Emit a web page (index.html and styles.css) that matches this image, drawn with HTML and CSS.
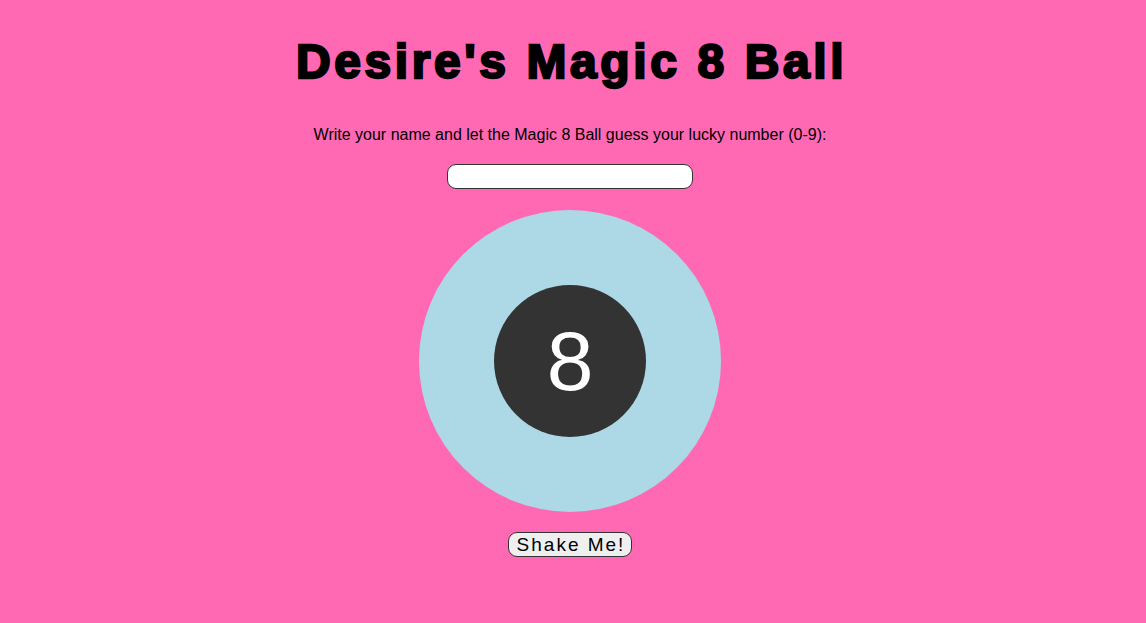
FILE: index.html
```html
<!DOCTYPE html>
<html>
<head>
<meta charset="utf-8">
<title>Desire's Magic 8 Ball</title>
<link rel="stylesheet" href="styles.css">
</head>
<body>
<main class="page">
  <h1 class="title">Desire's Magic 8 Ball</h1>
  <p class="prompt">Write your name and let the Magic 8 Ball guess your lucky number (0-9):</p>
  <input class="name-input" type="text">
  <div class="ball">
    <div class="ball-window"><span class="ball-number">8</span></div>
  </div>
  <button class="shake-btn">Shake Me!</button>
</main>
</body>
</html>
```

FILE: styles.css
```css
html, body {
  margin: 0;
  padding: 0;
  background: #ff69b4;
  height: 100%;
}
body {
  font-family: "Liberation Sans", Arial, sans-serif;
  color: #000;
}
.page {
  display: flex;
  flex-direction: column;
  align-items: center;
  padding-right: 6px;
}
.title {
  margin: 38px 0 0;
  font-size: 48px;
  line-height: 48px;
  font-weight: 900;
  letter-spacing: 3.6px;
  -webkit-text-stroke: 2.3px #000;
  padding-left: 3px;
}
.prompt {
  margin: 39px 0 0;
  font-size: 16px;
  line-height: 20px;
}
.name-input {
  margin-top: 19px;
  width: 246px;
  height: 25px;
  box-sizing: border-box;
  border: 1px solid #333;
  border-radius: 9px;
  background: #fff;
  padding: 0 8px;
  font-size: 14px;
  outline: none;
}
.ball {
  margin-top: 21px;
  width: 302px;
  height: 302px;
  border-radius: 50%;
  background: #add8e6;
  display: flex;
  align-items: center;
  justify-content: center;
}
.ball-window {
  width: 152px;
  height: 152px;
  border-radius: 50%;
  background: #333;
  display: flex;
  align-items: center;
  justify-content: center;
}
.ball-number {
  color: #fff;
  font-size: 84px;
  line-height: 1;
}
.shake-btn {
  margin-top: 20px;
  height: 25px;
  width: 124px;
  box-sizing: border-box;
  padding: 0 0 0 2px;
  border: 1px solid #333;
  border-radius: 9px;
  background: #efefef;
  font-family: "Liberation Sans", Arial, sans-serif;
  font-size: 19px;
  letter-spacing: 2px;
  color: #000;
  line-height: 1;
}
```
